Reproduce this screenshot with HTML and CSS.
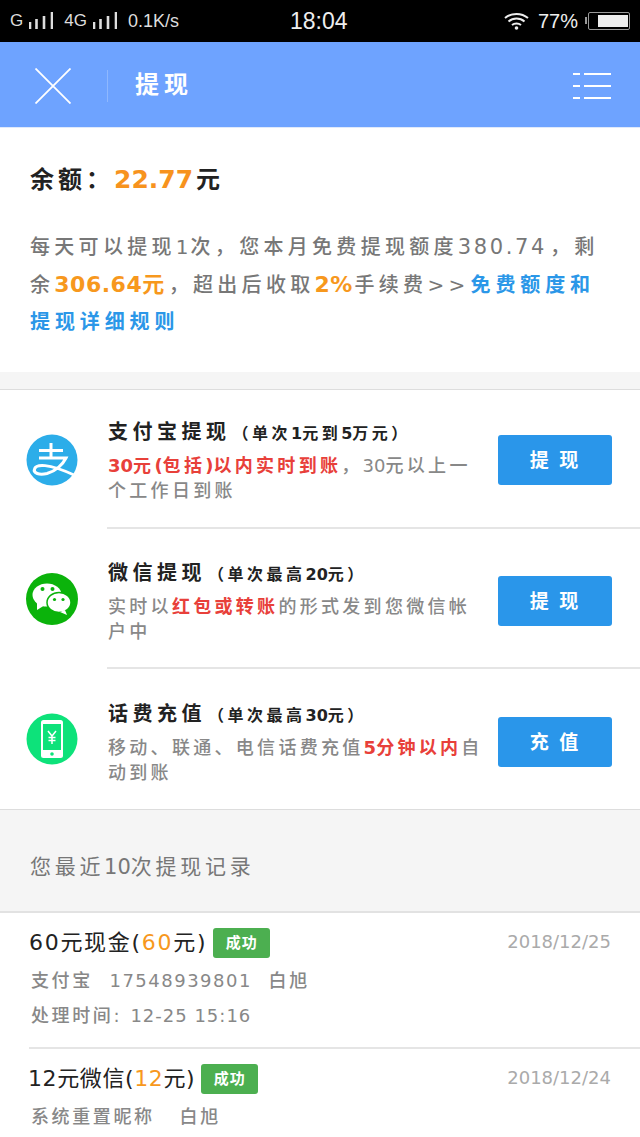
FILE: index.html
```html
<!DOCTYPE html>
<html lang="zh-CN">
<head>
<meta charset="utf-8">
<title>提现</title>
<link rel="stylesheet" href="styles.css">
</head>
<body>
<div class="page">
  <div class="status">
    <div class="st-left">
      <span>G</span>
      <svg class="sig" width="24" height="18" viewBox="0 0 24 18"><path d="M1 17V10M7.500 17V7M15 17V4M23 17V0" stroke="#ddd" stroke-width="2.600"/></svg>
      <span class="g4">4G</span>
      <svg class="sig" width="24" height="18" viewBox="0 0 24 18"><path d="M1 17V10M7.500 17V7M15 17V4M23 17V0" stroke="#ddd" stroke-width="2.600"/></svg>
      <span class="speed">0.1K/s</span>
    </div>
    <div class="st-time">18:04</div>
    <div class="st-right">
      <svg width="25" height="18" viewBox="0 0 25 18" fill="none" stroke="#eee" stroke-width="2"><path d="M1 6C7.500 0.500 17.500 0.500 24 6"/><path d="M4.500 9.500C9 5.500 16 5.500 20.500 9.500"/><path d="M8 13C10.500 11 14.500 11 17 13"/><circle cx="12.500" cy="16" r="1.800" fill="#eee" stroke="none"/></svg>
      <span class="pct">77%</span>
      <div class="batt"><div class="batt-fill"></div></div>
    </div>
  </div>

  <header class="nav">
    <svg class="nav-x" width="36" height="36" viewBox="0 0 36 36"><path d="M0.500 0.500L35.500 35.500M35.500 0.500L0.500 35.500" stroke="#fff" stroke-width="1.800"/></svg>
    <div class="nav-sep"></div>
    <div class="nav-title">提现</div>
    <svg class="nav-menu" width="38" height="26" viewBox="0 0 38 26"><path d="M0 1H7M11 1H38M0 13H7M11 13H38M0 25H7M11 25H38" stroke="#fff" stroke-width="2"/></svg>
  </header>

  <section class="balance">
    <div class="bal-line">余额：<span class="bal-num">22.77</span>元</div>
    <p class="bal-desc">每天可以提现<span class="one">1</span>次，您本月免费提现额度<span class="wide">380.74</span>，剩余<b class="or hl hl-amt">306.64元</b>，超出后收取<b class="or hl hl-pct">2%</b>手续费&gt;&gt;<b class="link">免费额度和提现详细规则</b></p>
  </section>

  <section class="methods">
    <div class="method">
      <svg class="m-icon" width="52" height="52" viewBox="0 0 52 52"><circle cx="26" cy="26" r="25.500" fill="#2cade9"/><path d="M13 16.500H37M25 9V24M13 24H40C37 30 30 37 21 39.500C13 41.500 7 39 8.500 35C10 30 22 29 48 41" fill="none" stroke="#fff" stroke-width="3"/></svg>
      <div class="m-body">
        <div class="m-text">
          <div class="m-title">支付宝提现<small>（单次<span class="n">1</span>元到<span class="n">5</span>万元）</small></div>
          <div class="m-desc"><b class="red"><span class="n">30</span>元<span class="n">(</span>包括<span class="n">)</span>以内实时到账</b>，<span class="n">30</span>元以上一个工作日到账</div>
        </div>
        <div class="m-btn">提 现</div>
      </div>
    </div>
    <div class="method">
      <svg class="m-icon" width="52" height="52" viewBox="0 0 52 52"><circle cx="26" cy="26" r="26" fill="#0bb30b"/><ellipse cx="21" cy="22" rx="14.500" ry="11.500" fill="#fff"/><path d="M11 29L11 37L19 32Z" fill="#fff"/><ellipse cx="33" cy="29.500" rx="12" ry="10" fill="#fff" stroke="#0bb30b" stroke-width="1.500"/><path d="M39 37L41 42L34 39Z" fill="#fff"/><circle cx="16.500" cy="16" r="2" fill="#0bb30b"/><circle cx="26.500" cy="16" r="2" fill="#0bb30b"/><circle cx="28.500" cy="26.500" r="1.600" fill="#0bb30b"/><circle cx="37" cy="26.500" r="1.600" fill="#0bb30b"/></svg>
      <div class="m-body">
        <div class="m-text">
          <div class="m-title">微信提现<small>（单次最高<span class="n">20</span>元）</small></div>
          <div class="m-desc">实时以<b class="red">红包或转账</b>的形式发到您微信帐户中</div>
        </div>
        <div class="m-btn">提 现</div>
      </div>
    </div>
    <div class="method">
      <svg class="m-icon" width="52" height="52" viewBox="0 0 52 52"><circle cx="26" cy="26" r="25.500" fill="#0de27a"/><rect x="15" y="7" width="22" height="38" rx="2.500" fill="#fff"/><rect x="17" y="11" width="18" height="26" fill="#0de27a"/><circle cx="26" cy="41" r="1.800" fill="#0de27a"/><path d="M22 18L26 23L30 18M26 23V31M22.500 24.500H29.500M22.500 27.500H29.500" fill="none" stroke="#fff" stroke-width="1.500"/></svg>
      <div class="m-body">
        <div class="m-text">
          <div class="m-title">话费充值<small>（单次最高<span class="n">30</span>元）</small></div>
          <div class="m-desc">移动、联通、电信话费充值<b class="red"><span class="n">5</span>分钟以内</b>自动到账</div>
        </div>
        <div class="m-btn">充 值</div>
      </div>
    </div>
  </section>

  <div class="rec-head">您最近<span class="n">10</span>次提现记录</div>

  <section class="records">
    <div class="record">
      <div class="r-top">
        <div class="r-title">60元现金(<span class="or">60</span>元)</div>
        <span class="r-tag">成功</span>
        <span class="r-date">2018/12/25</span>
      </div>
      <div class="r-info">支付宝&nbsp;&nbsp;<span class="acct">17548939801</span>&nbsp;&nbsp;白旭</div>
      <div class="r-info">处理时间: <span class="time">12-25 15:16</span></div>
    </div>
    <div class="record">
      <div class="r-top">
        <div class="r-title r-title-tight">12元微信(<span class="or">12</span>元)</div>
        <span class="r-tag">成功</span>
        <span class="r-date">2018/12/24</span>
      </div>
      <div class="r-info">系统重置昵称&nbsp;&nbsp;&nbsp;白旭</div>
    </div>
  </section>
</div>
</body>
</html>
```
FILE: styles.css
```css
* { box-sizing: border-box; }
html, body { margin: 0; padding: 0; background: #fff; }
body { font-family: "DejaVu Sans", "Noto Sans CJK SC", sans-serif; }
.page { width: 640px; height: 1137px; overflow: hidden; background: #fff; }
.n { letter-spacing: 0; }

.status { height: 42px; background: #000; color: #ddd; display: flex; align-items: center; padding: 0 10px; font-family: "Liberation Sans", sans-serif; font-size: 17px; }
.st-left { display: flex; align-items: center; width: 280px; }
.sig { margin-left: 6px; }
.g4 { margin-left: 11px; }
.speed { margin-left: 11px; font-size: 18px; }
.st-time { font-size: 23px; color: #eee; }
.st-right { margin-left: auto; display: flex; align-items: center; }
.pct { font-size: 20px; color: #eee; margin-left: 9px; }
.batt { position: relative; width: 42px; height: 18px; margin-left: 10px; border: 1.500px solid #999; border-radius: 2px; padding: 2px 1px 2px 9px; }
.batt::before { content: ""; position: absolute; left: -4px; top: 4px; width: 2px; height: 7px; background: #999; }
.batt-fill { height: 100%; background: #eee; }

.nav { height: 86px; background: #6ea3ff; display: flex; align-items: center; padding: 2px 29px 0 35px; border-bottom: 1px solid #dfe9fb; }
.nav-sep { width: 1px; height: 32px; background: #8fb8ff; margin-left: 36px; }
.nav-title { color: #fff; font-size: 24px; font-weight: 700; letter-spacing: 5px; margin-left: 27px; margin-top: -7px; }
.nav-menu { margin-left: auto; }

.balance { height: 261px; padding: 33px 30px 0; background: #fff; border-bottom: 17px solid #f5f5f5; box-shadow: 0 1px 0 #ddd; }
.bal-line { font-size: 24px; line-height: 38px; font-weight: 700; color: #222; letter-spacing: 4px; }
.bal-num { font-size: 25px; font-weight: 700; color: #f7931e; letter-spacing: 0; margin-right: 3px; }
.bal-desc { margin: 30px 0 0; font-size: 20px; line-height: 37px; color: #777; letter-spacing: 4.300px; font-weight: 500; }
.one { letter-spacing: 2px; }
.wide { font-size: 21px; letter-spacing: 2.600px; margin-right: 3px; }
.or { color: #f7981d; }
.hl { font-size: 22px; font-weight: 700; letter-spacing: 0.300px; }
.hl-amt { margin-right: 4px; letter-spacing: 0.500px; }
.hl-pct { margin-right: 2px; }
.link { color: #2b97e8; font-weight: 700; letter-spacing: 4.900px; margin-left: 1px; }
.red { color: #e8403a; font-weight: 700; }

.methods { margin-top: 1px; background: #fff; border-bottom: 1px solid #ddd; }
.method { display: flex; align-items: center; height: 140px; padding-left: 26px; }
.method:first-child { height: 139px; }
.m-icon { flex: none; }
.m-body { display: flex; align-items: center; flex: 1; height: 100%; margin-left: 29px; padding: 2px 28px 0 0; border-bottom: 2px solid #e5e5e5; }
.method:nth-child(2) .m-body { padding-top: 6px; }
.method:last-child .m-body { border-bottom: 0; padding-top: 5px; }
.m-text { flex: 1; min-width: 0; padding-left: 1px; }
.m-title { font-size: 20px; font-weight: 700; line-height: 30px; color: #222; letter-spacing: 4.500px; }
.m-title small { font-size: 16px; letter-spacing: 3.500px; margin-left: 2px; }
.m-desc { margin-top: 4px; font-size: 18px; line-height: 25px; color: #888; letter-spacing: 3.300px; font-weight: 500; }
.m-btn { flex: none; width: 114px; height: 50px; line-height: 50px; margin-left: 14px; text-align: center; background: #2a96ea; color: #fff; border-radius: 3px; font-size: 19px; font-weight: 700; letter-spacing: 2px; }

.rec-head { height: 103px; background: #f5f5f5; border-bottom: 2px solid #e2e2e2; padding-left: 30px; line-height: 114px; font-size: 21px; letter-spacing: 3.700px; color: #777; }

.records { background: #fff; }
.record { margin-left: 29px; padding-top: 10px; height: 136px; border-bottom: 2px solid #e5e5e5; }
.record:last-child { border-bottom: 0; }
.r-top { display: flex; align-items: center; height: 38px; }
.r-title { font-size: 22px; color: #222; letter-spacing: 1.700px; margin-top: -4px; }
.r-title-tight { letter-spacing: 0.600px; margin-left: -1px; }
.r-tag { margin-left: 6px; margin-top: 2px; width: 57px; height: 30px; line-height: 30px; border-radius: 3px; background: #4caf50; color: #fff; font-size: 15px; font-weight: 700; text-align: center; letter-spacing: 1px; }
.r-date { margin-left: auto; margin-right: 29px; margin-top: -1px; font-size: 18px; color: #aaa; }
.r-info { margin-top: 5px; padding-left: 2px; font-size: 18px; line-height: 30px; color: #888; letter-spacing: 2.600px; font-weight: 500; }
.acct { letter-spacing: 1.500px; }
.time { letter-spacing: 1px; }
```
